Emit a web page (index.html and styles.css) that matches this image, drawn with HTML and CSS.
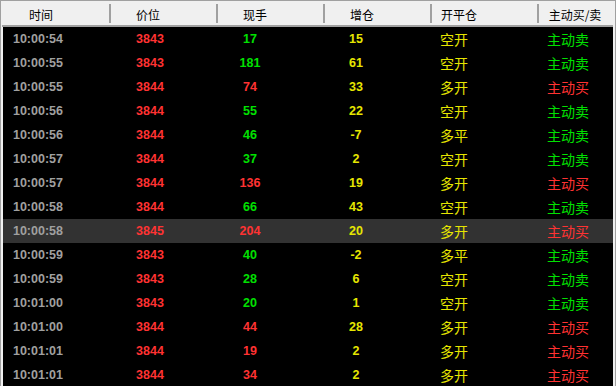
FILE: index.html
```html
<!DOCTYPE html>
<html lang="zh">
<head>
<meta charset="utf-8">
<link rel="stylesheet" href="styles.css">
</head>
<body>
<div class="panel">
  <div class="head">
    <div class="hc h0">时间</div><div class="sep"></div>
    <div class="hc h1">价位</div><div class="sep"></div>
    <div class="hc h2">现手</div><div class="sep"></div>
    <div class="hc h3">增仓</div><div class="sep"></div>
    <div class="hc h4">开平仓</div><div class="sep"></div>
    <div class="hc h5">主动买/卖</div>
  </div>
  <div class="body">
    <div class="row"><span class="t">10:00:54</span><span class="p">3843</span><span class="v g">17</span><span class="o">15</span><span class="k">空开</span><span class="d g">主动卖</span></div>
    <div class="row"><span class="t">10:00:55</span><span class="p">3843</span><span class="v g">181</span><span class="o">61</span><span class="k">空开</span><span class="d g">主动卖</span></div>
    <div class="row"><span class="t">10:00:55</span><span class="p">3844</span><span class="v r">74</span><span class="o">33</span><span class="k">多开</span><span class="d r">主动买</span></div>
    <div class="row"><span class="t">10:00:56</span><span class="p">3844</span><span class="v g">55</span><span class="o">22</span><span class="k">空开</span><span class="d g">主动卖</span></div>
    <div class="row"><span class="t">10:00:56</span><span class="p">3844</span><span class="v g">46</span><span class="o">-7</span><span class="k">多平</span><span class="d g">主动卖</span></div>
    <div class="row"><span class="t">10:00:57</span><span class="p">3844</span><span class="v g">37</span><span class="o">2</span><span class="k">空开</span><span class="d g">主动卖</span></div>
    <div class="row"><span class="t">10:00:57</span><span class="p">3844</span><span class="v r">136</span><span class="o">19</span><span class="k">多开</span><span class="d r">主动买</span></div>
    <div class="row"><span class="t">10:00:58</span><span class="p">3844</span><span class="v g">66</span><span class="o">43</span><span class="k">空开</span><span class="d g">主动卖</span></div>
    <div class="row sel"><span class="t">10:00:58</span><span class="p">3845</span><span class="v r">204</span><span class="o">20</span><span class="k">多开</span><span class="d r">主动买</span></div>
    <div class="row"><span class="t">10:00:59</span><span class="p">3843</span><span class="v g">40</span><span class="o">-2</span><span class="k">多平</span><span class="d g">主动卖</span></div>
    <div class="row"><span class="t">10:00:59</span><span class="p">3843</span><span class="v g">28</span><span class="o">6</span><span class="k">空开</span><span class="d g">主动卖</span></div>
    <div class="row"><span class="t">10:01:00</span><span class="p">3843</span><span class="v g">20</span><span class="o">1</span><span class="k">空开</span><span class="d g">主动卖</span></div>
    <div class="row"><span class="t">10:01:00</span><span class="p">3844</span><span class="v r">44</span><span class="o">28</span><span class="k">多开</span><span class="d r">主动买</span></div>
    <div class="row"><span class="t">10:01:01</span><span class="p">3844</span><span class="v r">19</span><span class="o">2</span><span class="k">多开</span><span class="d r">主动买</span></div>
    <div class="row"><span class="t">10:01:01</span><span class="p">3844</span><span class="v r">34</span><span class="o">2</span><span class="k">多开</span><span class="d r">主动买</span></div>
  </div>
</div>
</body>
</html>
```

FILE: styles.css
```css
* { box-sizing: border-box; }
html, body { margin: 0; padding: 0; background: #000; }
body { width: 616px; height: 386px; overflow: hidden; }

.panel {
  width: 616px;
  height: 386px;
  overflow: hidden;
  background: #000;
  border-top: 1px solid #a0a0a0;
  border-left: 1px solid #a0a0a0;
  border-right: 1px solid #a0a0a0;
  box-shadow: inset 2px 0 0 #f0f0f0, inset -2px 0 0 #f0f0f0;
  display: flex;
  flex-direction: column;
}

.head {
  height: 26px;
  flex: none;
  display: flex;
  align-items: stretch;
  background: #f0f0f0;
  border-bottom: 2px solid #a0a0a0;
  margin: 0 2px 0 1px;
  padding-left: 1px;
}
.hc {
  font-family: "Noto Sans CJK SC", "Microsoft YaHei", sans-serif;
  font-size: 12px;
  color: #000;
  text-align: center;
  line-height: 24px;
  padding-top: 2px;
}
.sep {
  width: 2px;
  flex: none;
  background: #a0a0a0;
  margin: 3px 0 2px;
}
.h0 { width: 106px; padding-right: 30px; }
.h1 { width: 105px; padding-right: 31px; }
.h2 { width: 105px; padding-right: 31px; }
.h3 { width: 105px; padding-right: 31px; }
.h4 { width: 105px; padding-right: 51px; }
.h5 { width: 74px; padding-right: 2px; }

.body {
  flex: 1;
  overflow: hidden;
  margin: 0 2px 0 1px;
  padding-left: 1px;
}
.row {
  display: grid;
  grid-template-columns: 106px 107px 107px 107px 107px 74px;
  height: 24px;
  line-height: 24px;
  font-family: "Liberation Sans", Arial, sans-serif;
  font-weight: bold;
  font-size: 12.5px;
}
.row.sel { background: #323232; }
.row span { text-align: center; white-space: nowrap; }

.t { color: #a0a0a0; padding-right: 36px; }
.p { color: #ff3232; padding-right: 25px; }
.v { padding-right: 39px; }
.o { color: #e6e600; padding-right: 41px; }
.k {
  color: #e6e600;
  padding-right: 59px;
  font-family: "Noto Sans CJK SC", sans-serif;
  font-weight: normal;
  font-size: 14px;
}
.d {
  padding-right: 12px;
  font-family: "Noto Sans CJK SC", sans-serif;
  font-weight: normal;
  font-size: 14px;
}
.g { color: #00e000; }
.r { color: #ff3232; }
```
